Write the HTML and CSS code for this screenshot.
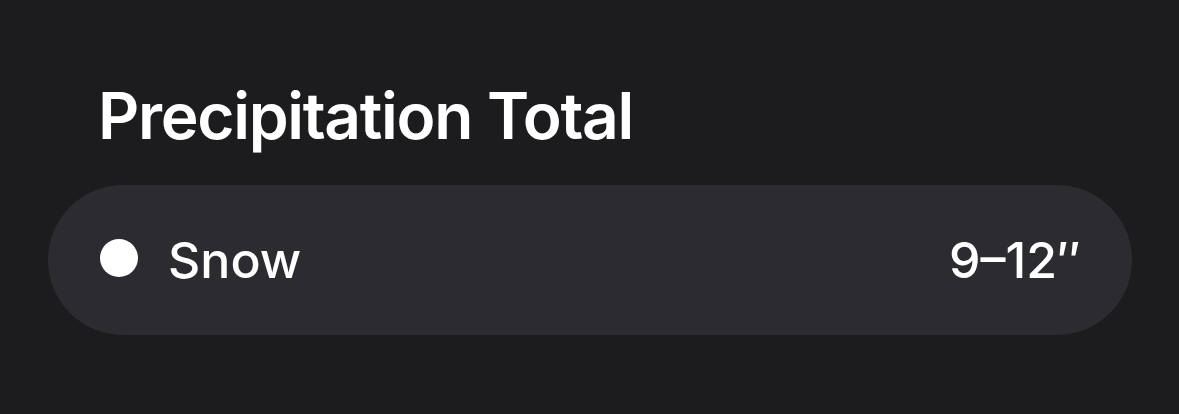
FILE: index.html
```html
<!DOCTYPE html>
<html>
<head>
<meta charset="utf-8">
<link rel="stylesheet" href="styles.css">
</head>
<body>
<main class="panel">
  <h1 class="title">Precipitation Total</h1>
  <div class="row">
    <span class="dot"></span>
    <span class="label">Snow</span>
    <span class="value">9–12″</span>
  </div>
</main>
</body>
</html>
```

FILE: styles.css
```css
html, body {
  margin: 0;
  padding: 0;
  background: #1c1c1e;
  width: 1179px;
  height: 414px;
  overflow: hidden;
  font-family: Inter, "Noto Sans", sans-serif;
  color: #ffffff;
}
.panel {
  padding: 76px 47px 0 48px;
  display: flex;
  flex-direction: column;
}
.title {
  margin: 0 0 0 50px;
  font-size: 64px;
  font-weight: 600;
  line-height: 80px;
  letter-spacing: -1.3px;
}
.row {
  margin-top: 29px;
  height: 150px;
  border-radius: 75px;
  background: #2c2c30;
  display: flex;
  align-items: center;
  padding: 0 51px 0 52px;
}
.dot {
  width: 38px;
  height: 38px;
  border-radius: 50%;
  background: #fff;
  flex: none;
  margin-top: -4px;
}
.label {
  margin-left: 30px;
  font-size: 50px;
  font-weight: 500;
  flex: 1;
}
.value {
  font-size: 50px;
  font-weight: 500;
}
```
